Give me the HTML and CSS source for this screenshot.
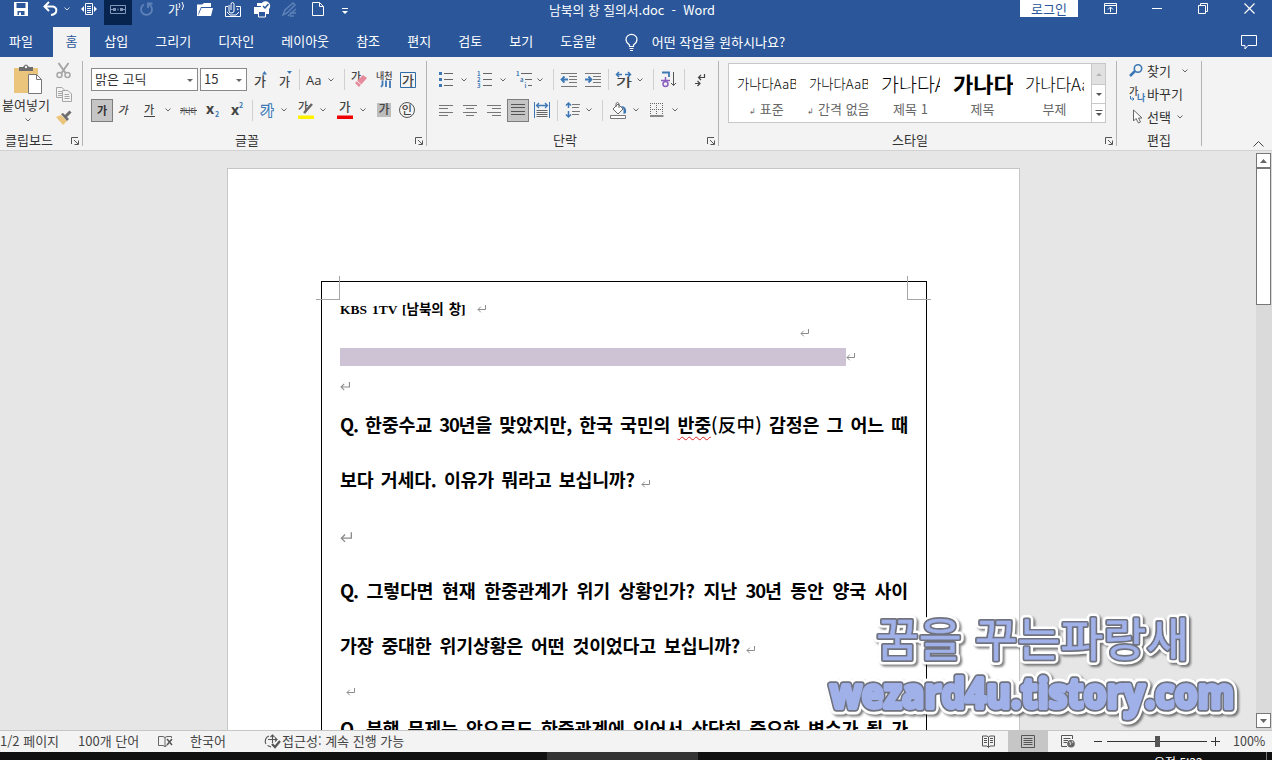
FILE: index.html
```
<!DOCTYPE html>
<html lang="ko">
<head>
    <meta charset="UTF-8">
    <meta name="viewport" content="width=device-width, initial-scale=1.0">
    <title>남북의 창 질의서.doc - Word</title>
    <link rel="stylesheet" href="styles.css">
</head>
<body>
    <svg class="sprite">
        <symbol id="chev" viewBox="0 0 6 4"><path d="M.5 .5L3 3L5.5 .5" fill="none" stroke="currentColor"/></symbol>
        <symbol id="ret" viewBox="0 0 9 8"><path d="M8.5 0V4.5H1M3.8 1.7L1 4.5L3.8 7.3" fill="none" stroke="#8c8c8c"/></symbol>
        <symbol id="launch" viewBox="0 0 8 8"><path d="M.5 7V.5H7M3 3L7 7M7.5 3.5V7.5H3.5" fill="none" stroke="#555"/></symbol>
    </svg>

    <!-- title bar -->
    <header class="titlebar">
        <div class="quick">
            <svg width="14" height="14" viewBox="0 0 14 14"><path d="M0 0H14V14H0Z" fill="#fff"/><path d="M2.5 1H11.5V6H2.5ZM3.5 9H10.5V13H3.5Z" fill="#2b579a"/><path d="M5 10.5H7V13H5Z" fill="#fff"/></svg>
            <svg width="15" height="14" viewBox="0 0 15 14"><path d="M6 0L1.5 4.5L6 9M2 4.5H9C15 4.5 15 12 8 13" fill="none" stroke="#fff" stroke-width="2"/></svg>
            <svg class="chev" width="6" height="4"><use href="#chev"/></svg>
            <svg width="16" height="12" viewBox="0 0 16 12"><path d="M4.5 .5H11.5V11.5H4.5ZM6 3.5H10M6 5.5H10M6 7.5H10M6 9.5H10" fill="none" stroke="#fff"/><path d="M3 3V9L0 6ZM13 3V9L16 6Z" fill="#fff"/></svg>
            <span class="touch"><svg width="16" height="9" viewBox="0 0 16 9"><path d="M.5 .5H15.5V8.5H.5ZM1 4.5H5M11 4.5H15" fill="none" stroke="#8297b8"/><path d="M3 3H6V6H3ZM10 3H13V6H10ZM7.5 3.5H8.5V5.5H7.5Z" fill="#8297b8"/></svg></span>
            <svg width="13" height="14" viewBox="0 0 13 14"><path d="M4 2.5A5.5 5.5 0 1 0 9 2.5M8 6V1.5H12.5" fill="none" stroke="#5f82b8" stroke-width="1.8"/></svg>
            <svg width="17" height="16" viewBox="0 0 17 16"><text x="0" y="14" font-size="12" fill="#fff">가</text><path d="M11 2Q13 4.500 11 7M14 1Q17 5 14 9" fill="none" stroke="#fff"/></svg>
            <svg width="16" height="13" viewBox="0 0 16 13"><path d="M0 13V1.500H5L7 0H14V4H4L1.500 10V13Z" fill="#fff"/><path d="M4.500 5H16L14 13H1Z" fill="#fff"/></svg>
            <svg width="17" height="15" viewBox="0 0 17 15"><path d="M3 4.500H.5V14.500H15.500V4.500H11M12 7H13V8" fill="none" stroke="#fff"/><path d="M4 3V9Q4 11 6 11Q9 11 9 9V2.500Q9 .5 7.500 .5Q6 .5 6 2.500V8M2 10L5 13H11L14 10" fill="none" stroke="#fff"/></svg>
            <svg width="17" height="17" viewBox="0 0 17 17"><path d="M0 6H15V13H12V11H4V13H0ZM3 2H8V5H3Z" fill="#fff"/><path d="M4.500 10.500H11.500V16H4.500Z" fill="#2b579a" stroke="#fff"/><circle cx="11.500" cy="5" r="4.700" fill="#fff"/><path d="M9 5L11 7L14.500 3" fill="none" stroke="#2b579a" stroke-width="1.500"/></svg>
            <svg width="15" height="15" viewBox="0 0 15 15"><path d="M1 13L3 8L11 1L13 3L5 11ZM6 14L14 7M8 14H12M8 11H14" fill="none" stroke="#5f82b8" stroke-width="1.500"/></svg>
            <svg width="12" height="14" viewBox="0 0 12 14"><path d="M.5 .5H7.500L11.500 4.500V13.500H.5ZM7.500 .5V4.500H11.500" fill="none" stroke="#fff"/></svg>
            <svg class="more" width="6" height="6" viewBox="0 0 6 6"><path d="M0 0H6V1H0ZM0 3H6L3 6Z" fill="#fff"/></svg>
        </div>
        <div class="doc-title">남북의 창 질의서.doc&nbsp; -&nbsp; Word</div>
        <div class="window-tools">
            <button class="login">로그인</button>
            <svg width="13" height="11" viewBox="0 0 13 11"><path d="M.5 .5H12.500V10.500H.5ZM.5 2.500H12.500M6.500 9V4.500M4 6.500L6.500 4L9 6.500" fill="none" stroke="#fff"/></svg>
            <svg width="10" height="11" viewBox="0 0 10 11"><path d="M0 5.500H10" stroke="#fff"/></svg>
            <svg width="10" height="11" viewBox="0 0 10 11"><path d="M.5 2.500H7.500V10.500H.5ZM2.500 2V.5H9.500V8.500H8" fill="none" stroke="#fff"/></svg>
            <svg width="11" height="11" viewBox="0 0 11 11"><path d="M.5 .5L10.500 10.500M10.500 .5L.5 10.500" stroke="#fff" stroke-width="1.200"/></svg>
        </div>
    </header>

    <nav class="tabs">
        <span class="tab file">파일</span>
        <span class="tab active">홈</span>
        <span class="tab">삽입</span>
        <span class="tab">그리기</span>
        <span class="tab">디자인</span>
        <span class="tab">레이아웃</span>
        <span class="tab">참조</span>
        <span class="tab">편지</span>
        <span class="tab">검토</span>
        <span class="tab">보기</span>
        <span class="tab">도움말</span>
        <svg class="bulb" width="13" height="17" viewBox="0 0 13 17"><path d="M4.500 12.500V11Q1 8.500 1 5.500A5.300 5 0 0 1 12 5.500Q12 8.500 8.500 11V12.500ZM4.500 14.500H8.500M5 16.500H8" fill="none" stroke="#fff" stroke-width="1.200"/></svg>
        <span class="tell">어떤 작업을 원하시나요?</span>
        <svg class="comment" width="16" height="15" viewBox="0 0 16 15"><path d="M.5 .5H15.500V10.500H7L4 14V10.500H.5Z" fill="none" stroke="#fff"/></svg>
    </nav>

    <!-- ribbon -->
    <section class="ribbon">
        <div class="group clipboard">
            <div class="tools">
                <div class="paste">
                    <svg width="29" height="31" viewBox="0 0 29 31"><path d="M0 4H24V29H0Z" fill="#eac57b"/><path d="M5 3H9Q12 -2 15 3H19V7H5Z" fill="#6d6d6d"/><circle cx="12" cy="3" r="1.200" fill="#f3f3f3"/><path d="M14.500 10.500H22.500L27.500 15.500V29.500H14.500Z" fill="#fff" stroke="#777"/><path d="M22.500 10.500V15.500H27.500" fill="none" stroke="#777"/></svg>
                    <span>붙여넣기</span>
                    <svg class="chev" width="6" height="4"><use href="#chev"/></svg>
                </div>
                <div class="clip-icons">
                    <svg width="15" height="16" viewBox="0 0 15 16"><path d="M2.500 0L9.500 10M12.500 0L5.500 10" stroke="#a6a6a6" stroke-width="2"/><circle cx="3.500" cy="12" r="2.500" fill="none" stroke="#a6a6a6" stroke-width="1.500"/><circle cx="11.500" cy="12" r="2.500" fill="none" stroke="#a6a6a6" stroke-width="1.500"/></svg>
                    <svg width="16" height="15" viewBox="0 0 16 15"><path d="M7 10.500H.5V.5H6L8.500 3M2 4.500H6M2 6.500H6M2 8.500H6" fill="none" stroke="#a6a6a6"/><path d="M6.500 3.500H12L15.500 7V14.500H6.500ZM8.500 7.500H13M8.500 9.500H13.500M8.500 11.500H13.500" fill="none" stroke="#a6a6a6"/></svg>
                    <svg width="16" height="15" viewBox="0 0 16 15"><path d="M0 7L5 5L11 11L7 15Z" fill="#eac57b"/><path d="M5 4L7 3L13 9L11 11Z" fill="#6d6d6d"/><path d="M9 7L14.500 1.500" stroke="#6d6d6d" stroke-width="3"/></svg>
                </div>
            </div>
            <div class="caption"><span>클립보드</span><svg width="8" height="8"><use href="#launch"/></svg></div>
        </div>

        <div class="group font">
            <div class="tools">
                <div class="row font-row1">
                    <span class="combo combo-name">맑은 고딕<i></i></span>
                    <span class="combo combo-size">15<i></i></span>
                    <svg width="15" height="18" viewBox="0 0 15 18"><text x="0" y="15" font-size="13">가</text><path d="M8 3.500L10.500 0L13 3.500Z" fill="#3d78b5"/></svg>
                    <svg width="15" height="18" viewBox="0 0 15 18"><text x="0" y="16" font-size="12">가</text><path d="M8 0H13L10.500 3Z" fill="#3d78b5"/></svg>
                    <b class="sep"></b>
                    <span class="aa">Aa</span>
                    <svg class="chev" width="6" height="4"><use href="#chev"/></svg>
                    <b class="sep"></b>
                    <svg width="17" height="18" viewBox="0 0 17 18"><text x="0" y="10" font-size="11">가</text><path d="M4 12L12 4L16 7L8 16Z" fill="#e5899b"/><path d="M6 10L10.500 14" stroke="#f3f3f3"/></svg>
                    <svg width="17" height="19" viewBox="0 0 17 19"><text x="0" y="9" font-size="9">내천</text><path d="M6.500 10.500V15L5 17M10 10.500V17M14 10.500V18" fill="none" stroke="#3d78b5" stroke-width="1.800"/></svg>
                    <svg width="16" height="16" viewBox="0 0 16 16"><path d="M.5 .5H15.500V15.500H.5Z" fill="#f3f3f3" stroke="#2e6ca8"/><text x="2" y="12.500" font-size="13">가</text></svg>
                </div>
                <div class="row font-row2">
                    <span class="toggle on">가</span>
                    <svg width="14" height="14" viewBox="0 0 14 14"><text x="2" y="11" font-size="11" font-weight="700" transform="skewX(-12)">가</text></svg>
                    <svg width="13" height="14" viewBox="0 0 13 14"><text x="1" y="11" font-size="11" font-weight="700">가</text><path d="M1 13.500H12" stroke="#444"/></svg>
                    <svg class="chev" width="6" height="4"><use href="#chev"/></svg>
                    <svg width="17" height="12" viewBox="0 0 17 12"><text x="0" y="10" font-size="8" textLength="16" lengthAdjust="spacingAndGlyphs">가나다</text><path d="M0 6.500H17" stroke="#444"/></svg>
                    <svg width="15" height="16" viewBox="0 0 15 16"><text class="latin" x="0" y="12" font-size="14">x</text><text class="sub" x="9" y="15" font-size="7">2</text></svg>
                    <svg width="15" height="16" viewBox="0 0 15 16"><text class="latin" x="0" y="13" font-size="14">x</text><text class="sub" x="8" y="6" font-size="7">2</text></svg>
                    <b class="sep"></b>
                    <svg width="15" height="16" viewBox="0 0 15 16"><text class="glow" x="1" y="13" font-size="13">가</text></svg>
                    <svg class="chev" width="6" height="4"><use href="#chev"/></svg>
                    <svg width="17" height="18" viewBox="0 0 17 18"><text x="1" y="10" font-size="11">가</text><path d="M7 12L15 3" stroke="#666" stroke-width="2.500"/><path d="M1 14.500H17V18H1Z" fill="#fff200"/></svg>
                    <svg class="chev" width="6" height="4"><use href="#chev"/></svg>
                    <svg width="17" height="18" viewBox="0 0 17 18"><text x="3" y="11" font-size="12.500">가</text><path d="M1 14.500H17V18H1Z" fill="#f00000"/></svg>
                    <svg class="chev" width="6" height="4"><use href="#chev"/></svg>
                    <svg width="14" height="14" viewBox="0 0 14 14"><path d="M0 0H14V14H0Z" fill="#bdbdbd"/><text x="1.500" y="11" font-size="12">가</text></svg>
                    <svg width="16" height="16" viewBox="0 0 16 16"><circle cx="8" cy="8" r="7.500" fill="none" stroke="#555"/><text x="2.800" y="12" font-size="11">인</text></svg>
                </div>
            </div>
            <div class="caption"><span>글꼴</span><svg width="8" height="8"><use href="#launch"/></svg></div>
        </div>

        <div class="group paragraph">
            <div class="tools">
                <div class="row para-row1">
                    <svg width="14" height="15" viewBox="0 0 14 15"><path d="M5 1.500H14M5 7.500H14M5 13.500H14" stroke="#666"/><path d="M0 0H3V3H0ZM0 6H3V9H0ZM0 12H3V15H0Z" fill="#3d78b5"/></svg>
                    <svg class="chev" width="6" height="4"><use href="#chev"/></svg>
                    <svg width="15" height="17" viewBox="0 0 15 17"><path d="M6 2.500H15M6 8.500H15M6 14.500H15" stroke="#666"/><text class="sub" x="0" y="5" font-size="6">1</text><text class="sub" x="0" y="11" font-size="6">2</text><text class="sub" x="0" y="17" font-size="6">3</text></svg>
                    <svg class="chev" width="6" height="4"><use href="#chev"/></svg>
                    <svg width="17" height="17" viewBox="0 0 17 17"><path d="M6 2.500H17M10 8.500H17M13 14.500H17" stroke="#666"/><text class="sub" x="1" y="5" font-size="6">1</text><text class="sub" x="5" y="11" font-size="6">a</text><text class="sub" x="9.500" y="17" font-size="6">i</text></svg>
                    <svg class="chev" width="6" height="4"><use href="#chev"/></svg>
                    <b class="sep"></b>
                    <svg width="17" height="14" viewBox="0 0 17 14"><path d="M1 .5H17M9 3.500H17M9 6.500H17M9 9.500H17M1 13.500H17" stroke="#777"/><path d="M8 6.500H2M4.500 3.500L1.500 6.500L4.500 9.500" fill="none" stroke="#3d78b5" stroke-width="1.800"/></svg>
                    <svg width="17" height="14" viewBox="0 0 17 14"><path d="M1 .5H17M9 3.500H17M9 6.500H17M9 9.500H17M1 13.500H17" stroke="#777"/><path d="M1 6.500H7M4.500 3.500L7.500 6.500L4.500 9.500" fill="none" stroke="#3d78b5" stroke-width="1.800"/></svg>
                    <b class="sep"></b>
                    <svg width="17" height="17" viewBox="0 0 17 17"><path d="M7 3.500H2M4 1L1.500 3.500L4 6M10 3.500H15M13 1L15.500 3.500L13 6" fill="none" stroke="#3d78b5" stroke-width="1.500"/><text x="1" y="15.500" font-size="11" textLength="16" lengthAdjust="spacingAndGlyphs">가</text></svg>
                    <svg class="chev" width="6" height="4"><use href="#chev"/></svg>
                    <b class="sep"></b>
                    <svg width="15" height="17" viewBox="0 0 15 17"><path d="M1 1.500H8V6" fill="none" stroke="#3d78b5" stroke-width="1.800"/><path d="M4.500 6V9M0 9.500H9" stroke="#8b5fbf" stroke-width="1.500"/><circle cx="4.500" cy="13" r="2.500" fill="none" stroke="#8b5fbf" stroke-width="1.500"/><path d="M12.500 1V14.500M10 12L12.500 14.500L15 12" fill="none" stroke="#555"/></svg>
                    <b class="sep"></b>
                    <svg width="12" height="14" viewBox="0 0 12 14"><path d="M10.500 1V4.500H5M7 2L4.500 4.500L7 7M1 10.500H6M3.500 8L6 10.500L3.500 13" fill="none" stroke="#444" stroke-width="1.200"/></svg>
                </div>
                <div class="row para-row2">
                    <svg width="14" height="11" viewBox="0 0 14 11"><path d="M0 .5H14M0 3.500H9M0 7.500H14M0 10.500H9" stroke="#777"/></svg>
                    <svg width="14" height="11" viewBox="0 0 14 11"><path d="M0 .5H14M3 3.500H11M0 7.500H14M3 10.500H11" stroke="#777"/></svg>
                    <svg width="14" height="11" viewBox="0 0 14 11"><path d="M0 .5H14M5 3.500H14M0 7.500H14M5 10.500H14" stroke="#777"/></svg>
                    <span class="toggle on"><svg width="14" height="11" viewBox="0 0 14 11"><path d="M0 .5H14M0 3.500H14M0 7.500H14M0 10.500H14" stroke="#555"/></svg></span>
                    <svg width="16" height="16" viewBox="0 0 16 16"><path d="M.5 0V16M15.500 0V16" stroke="#3d78b5"/><path d="M3 3.500H13M5 1L2.500 3.500L5 6M11 1L13.500 3.500L11 6" fill="none" stroke="#3d78b5" stroke-width="1.300"/><path d="M2.500 8.500H13.500M2.500 10.500H13.500M2.500 12.500H13.500M2.500 14.500H13.500" stroke="#666"/></svg>
                    <b class="sep"></b>
                    <svg width="16" height="16" viewBox="0 0 16 16"><path d="M3.500 1V6M1 3.500L3.500 1L6 3.500M3.500 9V15M1 12.500L3.500 15L6 12.500" fill="none" stroke="#3d78b5" stroke-width="1.500"/><path d="M7 2.500H15M7 5.500H14M7 9.500H15M7 12.500H14" stroke="#777"/></svg>
                    <svg class="chev" width="6" height="4"><use href="#chev"/></svg>
                    <b class="sep"></b>
                    <svg width="17" height="17" viewBox="0 0 17 17"><path d="M3 7L8 2L13 7L8 12ZM6 5V1.500Q7.500 -.5 9 1.500V6" fill="#fff" stroke="#666"/><path d="M11 4Q17 4 16 11L13.500 12V7Z" fill="#3d78b5"/><path d="M.5 13.500H15.500V16.500H.5Z" fill="#fff" stroke="#777"/></svg>
                    <svg class="chev" width="6" height="4"><use href="#chev"/></svg>
                    <svg width="14" height="14" viewBox="0 0 14 14"><path d="M.5 0V12M6.500 0V12M12.500 0V12M0 .5H13M0 6.500H13" stroke="#666" stroke-dasharray="1 1"/><path d="M0 13H13.500" stroke="#666" stroke-width="1.500"/></svg>
                    <svg class="chev" width="6" height="4"><use href="#chev"/></svg>
                </div>
            </div>
            <div class="caption"><span>단락</span><svg width="8" height="8"><use href="#launch"/></svg></div>
        </div>

        <div class="group styles">
            <div class="gallery">
                <div class="style"><p>가나다AaBb</p><span><small>↲</small> 표준</span></div>
                <div class="style"><p>가나다AaBb</p><span><small>↲</small> 간격 없음</span></div>
                <div class="style heading1"><p>가나다AaBb</p><span>제목 1</span></div>
                <div class="style heading"><p>가나다AaBb</p><span>제목</span></div>
                <div class="style subtitle"><p>가나다AaBb</p><span>부제</span></div>
                <div class="gallery-nav">
                    <span class="off"><svg width="6" height="3" viewBox="0 0 6 3"><path d="M0 3H6L3 0Z" fill="#b5b5b5"/></svg></span>
                    <span><svg width="6" height="3" viewBox="0 0 6 3"><path d="M0 0H6L3 3Z" fill="#555"/></svg></span>
                    <span><svg width="8" height="7" viewBox="0 0 8 7"><path d="M.5 0H7.500V1H.5ZM1 3H7L4 6Z" fill="#555"/></svg></span>
                </div>
            </div>
            <div class="caption"><span>스타일</span><svg width="8" height="8"><use href="#launch"/></svg></div>
        </div>

        <div class="group editing">
            <div class="edit-list">
                <div><svg width="15" height="13" viewBox="0 0 15 13"><circle cx="9" cy="4.500" r="3.700" fill="none" stroke="#3d78b5" stroke-width="1.600"/><path d="M6 7L1 12" stroke="#3d78b5" stroke-width="2.500"/></svg><span>찾기</span><svg class="chev far" width="6" height="4"><use href="#chev"/></svg></div>
                <div><svg width="17" height="16" viewBox="0 0 17 16"><text x="0" y="9" font-size="10">가</text><text class="sub" x="8" y="15" font-size="9">나</text><path d="M1.500 10V13H5M3.500 11.500L5 13L3.500 14.500" fill="none" stroke="#3d78b5"/></svg><span>바꾸기</span></div>
                <div><svg width="11" height="15" viewBox="0 0 11 15"><path d="M1.500 1V12L4 9.500L6.500 14L8.500 13L6.500 9H10Z" fill="#fff" stroke="#666"/></svg><span>선택</span><svg class="chev" width="6" height="4"><use href="#chev"/></svg></div>
            </div>
            <div class="caption"><span>편집</span></div>
        </div>
        <svg class="collapse" width="11" height="6" viewBox="0 0 11 6"><path d="M.5 5.500L5.500 .5L10.500 5.500" fill="none" stroke="#444"/></svg>
    </section>

    <!-- document area -->
    <main class="workspace">
        <div class="page">
            <div class="frame">
                <i class="crop crop-left"></i>
                <i class="crop crop-right"></i>
                <div class="line head"><b>KBS 1TV [남북의 창]</b><svg class="ret" width="9" height="8"><use href="#ret"/></svg></div>
                <div class="line second"><svg class="ret" width="9" height="8"><use href="#ret"/></svg></div>
                <div class="line third"><span class="redacted"></span><svg width="9" height="8"><use href="#ret"/></svg></div>
                <div class="line fourth"><svg width="10" height="9"><use href="#ret"/></svg></div>
                <p class="q full h44"><span class="num">Q.</span> 한중수교 <span class="num">30</span>년을 맞았지만, 한국 국민의 <span class="typo">반중</span><span class="hanja">(反中)</span> 감정은 그 어느 때</p>
                <p class="q h66 q1-end">보다 거세다. 이유가 뭐라고 보십니까?<svg class="ret" width="9" height="8"><use href="#ret"/></svg></p>
                <div class="line h48"><svg width="12" height="11"><use href="#ret"/></svg></div>
                <p class="q full h60"><span class="num">Q.</span> 그렇다면 현재 한중관계가 위기 상황인가? 지난 <span class="num">30</span>년 동안 양국 사이</p>
                <p class="q h50 q2-end">가장 중대한 위기상황은 어떤 것이었다고 보십니까?<svg class="ret" width="9" height="8"><use href="#ret"/></svg></p>
                <div class="line h42"><svg class="indent" width="9" height="8"><use href="#ret"/></svg></div>
                <p class="q full h32"><span class="num">Q.</span> 북핵 문제는 앞으로도 한중관계에 있어서 상당히 중요한 변수가 될 가</p>
            </div>
        </div>
        <div class="scrollbar">
            <span class="arrow"><svg width="7" height="4" viewBox="0 0 7 4"><path d="M0 4H7L3.500 0Z" fill="#666"/></svg></span>
            <span class="thumb"></span>
            <span class="arrow down"><svg width="7" height="4" viewBox="0 0 7 4"><path d="M0 0H7L3.500 4Z" fill="#666"/></svg></span>
        </div>
        <svg class="watermark" width="430" height="120" viewBox="0 0 430 120">
            <defs>
                <text id="wm-name" x="58" y="45" font-size="46" textLength="313" lengthAdjust="spacingAndGlyphs">꿈을 꾸는파랑새</text>
                <text id="wm-url" x="12" y="97" font-size="42" textLength="404" lengthAdjust="spacingAndGlyphs">wezard4u.tistory.com</text>
            </defs>
            <g class="wm-name"><use class="halo" href="#wm-name"/><use class="edge" href="#wm-name"/><use class="face" href="#wm-name"/></g>
            <g class="wm-url"><use class="halo" href="#wm-url"/><use class="edge" href="#wm-url"/><use class="face" href="#wm-url"/></g>
        </svg>
    </main>

    <footer class="status">
        <span class="s-page">1/2 페이지</span>
        <span class="s-words">100개 단어</span>
        <svg class="s-proof" width="15" height="13" viewBox="0 0 15 13"><path d="M7 11.500L5 10.500H.5V1.500H5L7 2.500V12M7 2.500L9 1.500H13.500V3M7 11.500L9 10.500" fill="none" stroke="#666"/><path d="M9 4L14 10M14 4L9 10" stroke="#555" stroke-width="1.500"/></svg>
        <span class="s-lang">한국어</span>
        <svg class="s-acc" width="17" height="15" viewBox="0 0 17 15"><path d="M5 2A5.500 5.500 0 0 0 2 10M3.500 11.500L7 13M4 5.500H13M8.500 1V9M6.500 3L8.500 1L10.500 3M11 3.500L13 5.500L11 7.500" fill="none" stroke="#555" stroke-width="1.100"/><path d="M8 10L11 13L16 7" fill="none" stroke="#555" stroke-width="2.200"/></svg>
        <span>접근성: 계속 진행 가능</span>
        <div class="views">
            <span><svg width="13" height="13" viewBox="0 0 13 13"><path d="M6.500 12.500V2L5 1H.5V11H5L6.500 12.500L8 11H12.500V1H8L6.500 2M2 3.500H5M2 5.500H5M2 7.500H5M8 3.500H11M8 5.500H11M8 7.500H11" fill="none" stroke="#555"/></svg></span>
            <span class="current"><svg width="14" height="13" viewBox="0 0 14 13"><path d="M.5 .5H13.500V12.500H.5ZM2.500 3.500H11.500M2.500 5.500H11.500M2.500 7.500H11.500M2.500 9.500H11.500" fill="none" stroke="#555"/></svg></span>
            <span><svg width="14" height="13" viewBox="0 0 14 13"><path d="M6 11.500H.5V.5H11.500V4M2.500 3.500H9.500M2.500 5.500H7M2.500 7.500H6" fill="none" stroke="#555"/><circle cx="10" cy="8.800" r="3.800" fill="#666"/><path d="M8 7L10 8L9 10M11 6L12 8" fill="none" stroke="#ddd"/></svg></span>
        </div>
        <div class="zoom">
            <span class="minus"></span>
            <span class="slider"><i></i></span>
            <span class="plus"></span>
            <span class="percent">100%</span>
        </div>
    </footer>
    <div class="taskbar"><span class="running"></span><span class="time">오전 5:22</span><span class="peek"></span></div>
</body>
</html>
```
FILE: styles.css
```
*{
    box-sizing: border-box;
}
body{
    margin: 0;
    width: 1272px;
    height: 760px;
    overflow: hidden;
    font-family: "Noto Sans CJK KR", sans-serif;
    font-size: 13px;
    color: #333;
    background-color: #e6e6e6;
}
p{
    margin: 0;
}
svg{
    display: block;
    flex: none;
    overflow: visible;
}
.sprite{
    position: absolute;
    width: 0;
    height: 0;
}

/* title bar */
.titlebar{
    display: flex;
    height: 27px;
    color: #fff;
    background-color: #2b579a;
}
.quick{
    display: grid;
    grid-template-columns: 29px 21px 17px 23px 36px 28px 29px 28px 29px 28px 30px 30px 6px;
    grid-template-rows: 18px;
    align-items: center;
    width: 534px;
    height: 18px;
    padding-left: 14px;
}
.quick .chev{
    color: #d5deeb;
}
.more{
    margin-top: 3px;
}
.touch{
    display: flex;
    align-self: start;
    justify-content: center;
    width: 28px;
    height: 25px;
    padding-top: 5px;
    background-color: #07244f;
}
.doc-title{
    width: 486px;
    padding-left: 15px;
    line-height: 20px;
    font-size: 12.8px;
    white-space: nowrap;
}
.window-tools{
    display: grid;
    grid-template-columns: 84px 48px 46px 46px 11px;
    align-items: center;
    height: 14px;
}
.login{
    align-self: start;
    width: 58px;
    height: 17px;
    padding: 0;
    border: 0;
    font: 13px/15px "Noto Sans CJK KR", sans-serif;
    color: #2b579a;
    background-color: #fff;
}
.tabs{
    display: flex;
    align-items: center;
    height: 30px;
    color: #fff;
    background-color: #2b579a;
}
.tab{
    height: 30px;
    padding: 0 13.55px;
    line-height: 28px;
    white-space: nowrap;
}
.file{
    width: 53px;
    padding: 0 0 0 9px;
}
.active{
    width: 37px;
    margin-right: 0.7px;
    padding: 0 12.5px;
    color: #2b579a;
    background-color: #f3f3f3;
}
.bulb{
    margin-left: 15px;
}
.tell{
    margin-left: 14px;
    margin-top: -2px;
    font-size: 13.05px;
}
.comment{
    margin-left: auto;
    margin-right: 15px;
}

/* ribbon */
.ribbon{
    display: flex;
    height: 94px;
    padding-top: 4px;
    background-color: #f3f3f3;
    border-bottom: 1px solid #d2d2d2;
}
.ribbon text{
    fill: #444;
    font-weight: 500;
}
.ribbon .sub{
    fill: #3d78b5;
    font-weight: 700;
}
.ribbon .latin{
    font-family: "Open Sans", sans-serif;
    font-weight: 700;
}
.ribbon .glow{
    fill: #fff;
    stroke: #3d78b5;
    stroke-width: 2.2px;
    paint-order: stroke;
}
.chev{
    color: #666;
}
.group{
    display: flex;
    flex-direction: column;
    height: 85px;
    border-right: 1px solid #b4b4b4;
}
.clipboard{
    width: 83px;
}
.font{
    width: 344px;
    padding-left: 8px;
}
.paragraph{
    width: 292px;
    padding-left: 12px;
}
.styles{
    width: 398px;
    padding-left: 9px;
}
.editing{
    width: 85px;
}
.tools{
    height: 70px;
}
.caption{
    display: flex;
    align-items: center;
    height: 20px;
    line-height: 20px;
    margin-top: auto;
    margin-bottom: -4px;
}
.caption span{
    flex: 1;
    text-align: center;
    white-space: nowrap;
}
.caption svg{
    margin: 2px 3px 0 0;
}
.clipboard .caption span{
    text-align: left;
    padding-left: 5px;
}
.font .caption span{
    padding-right: 12px;
}
.paragraph .caption span{
    padding-right: 16px;
}
.styles .caption span{
    padding-right: 13px;
}
.clipboard .tools{
    display: flex;
}
.paste{
    display: flex;
    flex-direction: column;
    align-items: center;
    width: 52px;
    padding-top: 3px;
    line-height: 20px;
}
.paste > svg:first-child{
    margin-left: 5px;
}
.paste .chev{
    margin-top: 3px;
    margin-left: 3px;
}
.clip-icons{
    display: flex;
    flex-direction: column;
    gap: 8px;
    padding: 2px 0 0 4px;
}
.row{
    display: grid;
    align-items: center;
    height: 31px;
}
.tools .row:first-child{
    margin-top: 3px;
}
.tools .row:last-child{
    height: 30px;
}
.font-row1{
    grid-template-columns: 109px 54px 25px 20px 7px 22px 16px 7px 25px 24px 17px;
}
.font-row2{
    grid-template-columns: 27px 25px 22px 15px 26px 25px 21px 8px 21px 16px 23px 16px 24px 17px 22px 17px;
}
.para-row1{
    grid-template-columns: 22px 16px 23px 15px 22px 16px 7px 24px 24px 7px 22px 16px 8px 23px 10px 12px;
}
.para-row2{
    grid-template-columns: 24px 24px 20px 27px 23px 8px 21px 16px 8px 23px 17px 22px 8px;
}
.sep{
    width: 1px;
    height: 21px;
    background-color: #d0d0d0;
}
.combo{
    display: flex;
    align-items: center;
    justify-content: space-between;
    height: 23px;
    padding: 0 4px 2px 3px;
    border: 1px solid #8a8a8a;
    background-color: #fff;
}
.combo i{
    border: 3px solid transparent;
    border-top-color: #666;
    border-bottom: 0;
    margin-top: 3px;
}
.combo-name{
    width: 107px;
}
.combo-size{
    width: 47px;
    font-size: 13px;
}
.aa{
    font: 13px "Open Sans", sans-serif;
}
.toggle{
    display: flex;
    align-items: center;
    justify-content: center;
    width: 22px;
    height: 23px;
    padding-bottom: 1px;
    font-size: 11px;
    font-weight: 700;
}
.on{
    border: 1px solid #7d7d7d;
    background-color: #c5c5c5;
}
.gallery{
    display: flex;
    width: 378px;
    height: 60px;
    margin-top: 2px;
    padding-left: 1px;
    border: 1px solid #c8c8c8;
    background-color: #fff;
}
.style{
    width: 72px;
    padding-left: 7px;
}
.style p{
    width: 59px;
    height: 31px;
    overflow: hidden;
    font-size: 13.3px;
    font-weight: 300;
    line-height: 39px;
    color: #000;
    white-space: nowrap;
}
.style span{
    display: block;
    margin-left: -6px;
    font-size: 13px;
    line-height: 28px;
    text-align: center;
    color: #666;
    white-space: nowrap;
}
.style small{
    font-size: 8px;
}
.heading1 p{
    font-size: 19.500px;
}
.heading p{
    width: 60px;
    font-size: 22px;
    font-weight: 700;
}
.subtitle p{
    font-size: 17px;
    letter-spacing: -.3px;
}
.gallery-nav{
    display: grid;
    grid-template-rows: 20px 19px 19px;
    width: 14px;
    margin-left: auto;
    border-left: 1px solid #c8c8c8;
}
.gallery-nav span{
    display: flex;
    align-items: center;
    justify-content: center;
}
.gallery-nav span + span{
    border-top: 1px solid #c8c8c8;
}
.off{
    background-color: #e1e1e1;
}
.edit-list{
    margin-top: -2px;
}
.edit-list div{
    display: grid;
    grid-template-columns: 18px 30px 6px;
    align-items: center;
    height: 23px;
    line-height: 20px;
    padding-left: 12px;
    white-space: nowrap;
}
.edit-list .far{
    margin-left: 5px;
}
.edit-list div:last-child svg:first-child{
    margin-left: 3px;
}
.collapse{
    margin-left: auto;
    margin-right: 8px;
    margin-top: 80px;
}

/* document */
.workspace{
    position: relative;
    display: flex;
    height: 579px;
    overflow: hidden;
    background-color: #e6e6e6;
}
.page{
    width: 793px;
    height: 900px;
    margin: 17px 0 0 227px;
    padding: 112px 0 0 93px;
    border: 1px solid #c6c6c6;
    background-color: #fff;
}
.frame{
    position: relative;
    width: 606px;
    height: 800px;
    padding: 15px 18px 0;
    border: 1px solid #000;
    color: #000;
}
.crop{
    position: absolute;
    top: -6px;
    width: 24px;
    height: 24px;
    border-bottom: 1px solid #a6a6a6;
}
.crop-left{
    left: -6px;
    border-right: 1px solid #a6a6a6;
}
.crop-right{
    right: -5px;
    border-left: 1px solid #a6a6a6;
}
.line{
    display: flex;
    align-items: center;
    height: 24px;
}
.head b{
    width: 137px;
    padding-bottom: 2px;
    font: bold 13.5px "Liberation Serif", "Noto Sans CJK KR", serif;
    word-spacing: 1.500px;
    white-space: nowrap;
}
.second svg{
    margin-left: 460px;
}
.redacted{
    width: 506px;
    height: 18px;
    background-color: #cec3d4;
}
.fourth{
    height: 34px;
}
.q{
    margin-top: -1px;
    margin-bottom: 1px;
    font-size: 18.4px;
    font-weight: 700;
    letter-spacing: -.2px;
    white-space: nowrap;
}
.full{
    text-align: justify;
    text-align-last: justify;
}
.num{
    letter-spacing: -1.2px;
}
.h32{ height: 32px; line-height: 32px; }
.h42{ height: 42px; }
.h44{ height: 44px; line-height: 44px; }
.h48{ height: 48px; }
.h50{ height: 50px; line-height: 50px; }
.h60{ height: 60px; line-height: 60px; }
.h66{ height: 66px; line-height: 66px; }
.q .ret{
    display: inline-block;
    margin-left: 6px;
    vertical-align: -1px;
}
.q1-end{
    word-spacing: 2.3px;
}
.q2-end{
    word-spacing: 3px;
}
.indent{
    margin-left: 6px;
}
.typo{
    text-decoration: underline wavy #e02020 1px;
    text-underline-offset: 4px;
}
.hanja{
    font-weight: 500;
    letter-spacing: -2px;
    margin-right: 2px;
}
.scrollbar{
    display: flex;
    flex-direction: column;
    width: 16px;
    height: 577px;
    margin: 2px 0 0 236px;
    background-color: #dadada;
}
.arrow{
    display: flex;
    align-items: center;
    justify-content: center;
    width: 15px;
    height: 15px;
    border: 1px solid #777;
    background-color: #fff;
}
.thumb{
    width: 15px;
    height: 137px;
    border: 1px solid #777;
    background-color: #fff;
}
.down{
    margin-top: auto;
    margin-bottom: 2px;
}

/* watermark lies over the page */
.watermark{
    position: absolute;
    left: 818px;
    top: 460px;
    filter: drop-shadow(2px 2px 1px rgba(0, 0, 0, .5));
    stroke-linejoin: round;
}
.wm-name{
    font-weight: 400;
}
.wm-url{
    font-family: "Open Sans", sans-serif;
    font-weight: 700;
}
.halo{
    fill: #fff;
    stroke: #fff;
    stroke-width: 9px;
}
.edge{
    fill: #70737e;
    stroke: #70737e;
    stroke-width: 4px;
}
.face{
    fill: #a0b0e8;
    stroke: #a0b0e8;
    stroke-width: .6px;
}
.wm-url .halo{
    stroke-width: 13px;
}
.wm-url .edge{
    stroke-width: 7.5px;
}
.wm-url .face{
    stroke-width: 4px;
}

/* status bar */
.status{
    display: flex;
    align-items: center;
    height: 22px;
    line-height: 19px;
    font-size: 13px;
    color: #444;
    background-color: #f3f3f3;
    border-top: 1px solid #c6c6c6;
    white-space: nowrap;
}
.status > span{
    margin-top: -2px;
}
.s-page{
    width: 78px;
}
.s-words{
    width: 80px;
}
.s-proof{
    margin-right: 17px;
}
.s-lang{
    width: 74px;
}
.s-acc{
    margin-right: 1px;
}
.views{
    display: flex;
    margin-left: auto;
}
.views span{
    display: flex;
    align-items: center;
    justify-content: center;
    width: 40px;
    height: 21px;
}
.views .current{
    background-color: #c6c6c6;
}
.zoom{
    display: flex;
    align-items: center;
    width: 184px;
    padding-left: 6px;
}
.minus{
    width: 8px;
    height: 1px;
    background-color: #333;
}
.slider{
    display: flex;
    align-items: center;
    justify-content: center;
    width: 100px;
    height: 1px;
    margin: 0 4px 0 5px;
    background-color: #333;
}
.slider i{
    flex: none;
    width: 5px;
    height: 11px;
    background-color: #555;
}
.plus{
    width: 9px;
    height: 9px;
    background: linear-gradient(#333, #333) center / 9px 1px no-repeat, linear-gradient(#333, #333) center / 1px 9px no-repeat;
}
.percent{
    margin-left: 13px;
    margin-top: -2px;
    font-size: 12.500px;
}
.taskbar{
    display: flex;
    height: 8px;
    overflow: hidden;
    color: #fff;
    background-color: #101010;
}
.running{
    width: 151px;
    margin-left: 547px;
    background-color: #333;
}
.time{
    margin-left: 456px;
    width: 112px;
    font-size: 12px;
    line-height: 20px;
}
.peek{
    width: 1px;
    background-color: #777;
}
```
